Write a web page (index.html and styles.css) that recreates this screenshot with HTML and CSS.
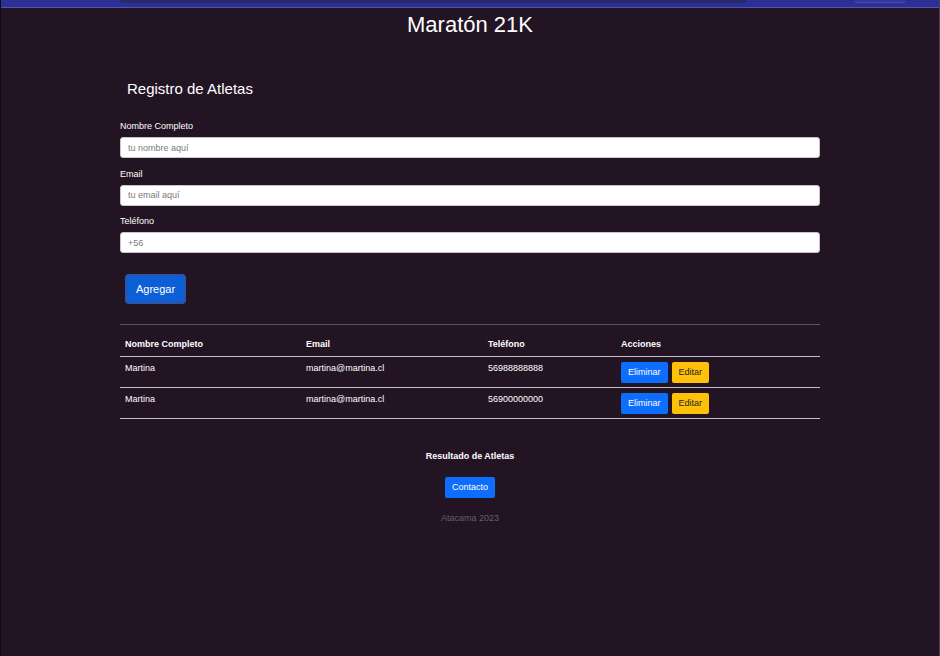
FILE: index.html
```html
<!DOCTYPE html>
<html lang="es">
<head>
<meta charset="utf-8">
<title>Maratón 21K</title>
<link rel="stylesheet" href="styles.css">
</head>
<body>
<div class="chrome">
  <div class="address"></div>
  <div class="pill"></div>
</div>
<main class="page">
  <h1 class="title">Maratón 21K</h1>
  <section class="container">
    <h2 class="subtitle">Registro de Atletas</h2>
    <form class="form">
      <div class="field">
        <label class="label">Nombre Completo</label>
        <input class="input" type="text" placeholder="tu nombre aquí">
      </div>
      <div class="field">
        <label class="label">Email</label>
        <input class="input" type="text" placeholder="tu email aquí">
      </div>
      <div class="field">
        <label class="label">Teléfono</label>
        <input class="input" type="text" placeholder="+56">
      </div>
      <div class="actions">
        <button type="button" class="btn-primary">Agregar</button>
      </div>
    </form>
    <table class="table">
      <thead>
        <tr>
          <th class="c1">Nombre Completo</th>
          <th class="c2">Email</th>
          <th class="c3">Teléfono</th>
          <th class="c4">Acciones</th>
        </tr>
      </thead>
      <tbody>
        <tr>
          <td>Martina</td>
          <td>martina@martina.cl</td>
          <td>56988888888</td>
          <td><div class="btns"><button type="button" class="btn-sm blue">Eliminar</button><button type="button" class="btn-sm yellow">Editar</button></div></td>
        </tr>
        <tr>
          <td>Martina</td>
          <td>martina@martina.cl</td>
          <td>56900000000</td>
          <td><div class="btns"><button type="button" class="btn-sm blue">Eliminar</button><button type="button" class="btn-sm yellow">Editar</button></div></td>
        </tr>
      </tbody>
    </table>
  </section>
  <footer class="footer">
    <p class="footer-title">Resultado de Atletas</p>
    <button type="button" class="btn-sm blue contact">Contacto</button>
    <p class="copy">Atacama 2023</p>
  </footer>
</main>
</body>
</html>
```
FILE: styles.css
```css
html, body {
  margin: 0;
  padding: 0;
  height: 100%;
}
body {
  background: #231424;
  color: #ffffff;
  font-family: "Liberation Sans", Arial, sans-serif;
  border-left: 1px solid #120a12;
  border-right: 1px solid #4a3a55;
  box-sizing: border-box;
  min-height: 656px;
}
.chrome {
  height: 7px;
  background: #2e2f92;
  border-bottom: 1px solid #5252b8;
  display: flex;
  align-items: flex-start;
  padding-left: 119px;
}
.address {
  width: 626px;
  height: 3px;
  background: #28296a;
  border-radius: 0 0 8px 8px;
}
.pill {
  width: 50px;
  height: 2px;
  margin-left: 109px;
  background: #3535a0;
  border-radius: 0 0 6px 6px;
  box-shadow: 0 1px 0 #4a4ab4;
}
.page {
  display: flex;
  flex-direction: column;
  align-items: center;
}
.title {
  margin: 4px 0 0;
  font-size: 22px;
  line-height: 26px;
  font-weight: normal;
}
.container {
  width: 700px;
  margin-top: 42px;
}
.subtitle {
  margin: 0 0 21px 7px;
  font-size: 15px;
  line-height: 18px;
  font-weight: normal;
}
.form {
  display: flex;
  flex-direction: column;
}
.field {
  display: flex;
  flex-direction: column;
  margin-bottom: 8.5px;
}
.label {
  font-size: 9px;
  line-height: 14px;
  margin-bottom: 4px;
}
.input {
  box-sizing: border-box;
  height: 21px;
  width: 100%;
  margin: 0;
  border: 1px solid #c9c3d0;
  border-radius: 3px;
  background: #ffffff;
  padding: 0 7px;
  font-family: "Liberation Sans", Arial, sans-serif;
  font-size: 9px;
  color: #212529;
}
.input::placeholder {
  color: #7a7a7a;
}
.actions {
  padding: 12px 0 0 5px;
}
.btn-primary {
  box-sizing: border-box;
  height: 30px;
  width: 61px;
  padding: 0;
  background: #0d5fd8;
  border: 2px solid #2b56a8;
  border-radius: 4px;
  color: #ffffff;
  font-family: "Liberation Sans", Arial, sans-serif;
  font-size: 11px;
}
.table {
  width: 700px;
  margin-top: 20px;
  border-collapse: collapse;
  border-top: 1px solid #5c5262;
  font-size: 9px;
  table-layout: fixed;
}
.table th {
  text-align: left;
  font-weight: bold;
  height: 26px;
  padding: 0 5px 5px;
  line-height: 13px;
  vertical-align: bottom;
  border-bottom: 1px solid #c4c0c6;
}
.table td {
  padding: 5px 5px 0;
  height: 25px;
  vertical-align: top;
  line-height: 13px;
  border-bottom: 1px solid #c4c0c6;
}
.c1 { width: 171px; }
.c2 { width: 172px; }
.c3 { width: 123px; }
.c4 { width: auto; }
.btns {
  display: flex;
  gap: 4px;
}
.btn-sm {
  box-sizing: border-box;
  height: 21px;
  padding: 0 6px;
  border: 1px solid transparent;
  border-radius: 2px;
  font-family: "Liberation Sans", Arial, sans-serif;
  font-size: 9px;
  line-height: 19px;
}
.blue {
  background: #0d6efd;
  color: #ffffff;
}
.yellow {
  background: #ffc107;
  color: #212529;
}
.footer {
  display: flex;
  flex-direction: column;
  align-items: center;
  margin-top: 31px;
}
.footer-title {
  margin: 0;
  font-size: 9px;
  line-height: 12px;
  font-weight: bold;
}
.contact {
  margin-top: 15px;
  width: 50px;
  padding: 0;
}
.copy {
  margin: 14px 0 0;
  font-size: 9px;
  line-height: 12px;
  color: #665c6c;
}
```
